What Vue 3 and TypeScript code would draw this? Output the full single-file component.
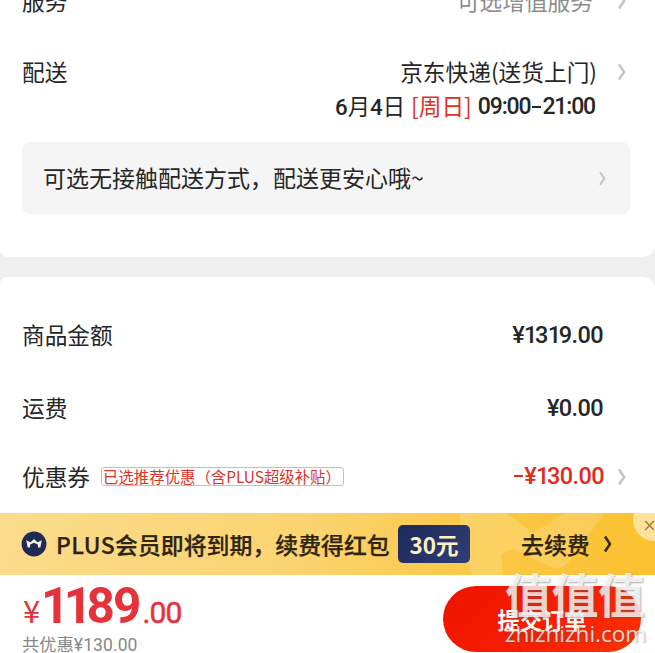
<script setup lang="ts">
interface Fee { label: string; value: string }
const fees: Fee[] = [
  { label: '商品金额', value: '¥1319.00' },
  { label: '运费', value: '¥0.00' },
]
</script>

<template>
  <main class="page">
    <section class="card delivery">
      <div class="row service">
        <span class="label">服务</span>
        <span class="muted">可选增值服务</span>
        <svg class="arrow" viewBox="0 0 10 18"><path d="M2 1.5 L7.2 9 L2 16.5" /></svg>
      </div>
      <div class="row express">
        <span class="label">配送</span>
        <span class="method">京东快递(送货上门)</span>
        <svg class="arrow" viewBox="0 0 10 18"><path d="M2 1.5 L7.2 9 L2 16.5" /></svg>
      </div>
      <div class="when">
        <span class="date"><b>6</b>月<b>4</b>日</span>
        <span class="week">[周日]</span>
        <span class="time">09:00<i class="dash"></i>21:00</span>
      </div>
      <div class="notice">
        <span class="tip">可选无接触配送方式，配送更安心哦~</span>
        <svg class="arrow small" viewBox="0 0 10 18"><path d="M2 1.5 L7.2 9 L2 16.5" /></svg>
      </div>
    </section>

    <section class="card amounts">
      <div v-for="f in fees" :key="f.label" class="row fee">
        <span class="label">{{ f.label }}</span>
        <span class="num"><span v-for="(c, i) in f.value" :key="i" :class="{ one: c === '1' }">{{ c }}</span></span>
      </div>
      <div class="row coupon">
        <span class="label">优惠券</span>
        <span class="tag">已选推荐优惠（含PLUS超级补贴）</span>
        <span class="num red"><i class="dash"></i>¥<span class="one">1</span>30.00</span>
        <svg class="arrow" viewBox="0 0 10 18"><path d="M2 1.5 L7.2 9 L2 16.5" /></svg>
      </div>
    </section>

    <section class="banner">
      <svg class="deco" viewBox="0 0 200 62"><path d="M5 0 H51 L78 20 L110 0 H150 L118 43 Q108 61 92 52 L58 36 L46 41 L48 62 H17 Q5 35 5 0 Z" /></svg>
      <svg class="crown" viewBox="0 0 26 26">
        <circle cx="13" cy="13" r="12.4" />
        <path d="M5.2 9.2 L9.6 11.3 L13 8 L16.4 11.3 L20.8 9.2 L19.3 16.6 H17.1 L16.8 13.6 L13 11.8 L9.2 13.6 L8.9 16.6 H6.7 Z" />
      </svg>
      <span class="promo"><span class="plus">PLUS</span>会员即将到期，续费得红包</span>
      <span class="bonus">30元</span>
      <span class="renew">去续费</span>
      <svg class="go" viewBox="0 0 10 18"><path d="M2 1.5 L7 9 L2 16.5" /></svg>
      <span class="close"><svg viewBox="0 0 12 12"><path d="M1.2 1.2 L10.8 10.8 M10.8 1.2 L1.2 10.8" /></svg></span>
    </section>

    <footer class="footer">
      <div class="sum">
        <div class="total"><span class="yen">¥</span><span class="big"><span class="ones">11</span>89</span><span class="cents">.00</span></div>
        <div class="saved">共优惠<span>¥130.00</span></div>
      </div>
      <button class="submit">提交订单</button>
    </footer>
    <div class="mark">
      <div class="mark-name">值值值</div>
      <div class="mark-url">zhizhizhi.com</div>
    </div>
  </main>
</template>

<style>
body { margin: 0; overflow: hidden; }
</style>
<style scoped>
.page { position: relative; width: 655px; height: 653px; overflow: hidden; background: #f0f0f0; color: #262626; font: 22.7px/36px "Noto Sans CJK SC", sans-serif; display: flex; flex-direction: column; box-sizing: border-box; white-space: nowrap; }
.card { background: #fff; box-sizing: border-box; flex: none; }
.delivery { height: 257px; border-radius: 0 0 12px 7px; padding: 0 25px 0 22px; overflow: hidden; }
.amounts { height: 236px; margin-top: 20px; border-radius: 7px 12px 0 0; padding: 40px 25px 0 22px; }
.row { display: flex; align-items: center; height: 36px; }
.tip { padding-bottom: 2px; }
.label { margin-right: auto; }
.service { margin-top: -17px; }
.express { margin-top: 35px; }
.muted { color: #8c8c8c; }
.arrow { width: 10px; height: 18px; margin-left: 20px; fill: none; stroke: #c3c3c3; stroke-width: 2.4; flex: none; }
.row .arrow { margin-right: 3px; }
.service .muted { margin-right: 4px; }
.when { display: flex; justify-content: flex-end; align-items: center; height: 34px; line-height: 34px; margin-right: 36px; gap: 6px; }
.week { color: #dc321c; padding-bottom: 2px; }
.date { font-size: 22.3px; padding-bottom: 2px; }
.date b, .time, .num { font-family: Roboto, sans-serif; font-weight: 500; }
.time { font-size: 23px; letter-spacing: -1.15px; display: flex; align-items: center; margin-right: -1px; }
.dash { display: inline-block; width: 9px; height: 2.4px; background: currentColor; margin: 0 1px 0 2px; }
.notice { height: 72px; margin-top: 18px; background: #f5f5f5; border-radius: 8px; padding: 0 23px 0 21px; display: flex; align-items: center; justify-content: space-between; font-size: 23px; }
.small { width: 9px; height: 15px; }
.label, .method, .muted { padding-bottom: 1px; }
.fee { margin-bottom: 37px; padding-right: 27px; }
.num { font-size: 23.5px; letter-spacing: -.6px; }
.one { letter-spacing: -2.4px; }
.coupon { margin-top: -4px; }
.coupon .label { margin-right: 11px; padding-bottom: 0; }
.tag { font-size: 15.4px; line-height: 16px; height: 17px; color: #dc3325; border: 1px solid #f2aea6; border-radius: 3px; padding: 0 1px; width: 239px; box-sizing: content-box; margin: 0 auto 1px 0; }
.red { color: #e12b1b; display: flex; align-items: center; margin-right: -7px; padding-bottom: 2px; }
.banner { position: relative; height: 62px; flex: none; background: linear-gradient(100deg, #fbdc8d 0%, #fbd471 45%, #fbc844 75%, #fbc12f 100%); color: #2f2410; display: flex; align-items: center; padding-left: 21px; box-sizing: border-box; overflow: hidden; font-weight: 500; font-size: 22.9px; -webkit-text-stroke: .25px currentColor; }
.deco { position: absolute; right: 0; top: 0; width: 200px; height: 62px; fill: #fff; opacity: .16; }
.crown { width: 26px; height: 26px; margin-right: 9px; position: relative; flex: none; }
.crown circle { fill: #1f2b55; }
.crown path { fill: #f5f0e4; }
.promo { width: 342px; position: relative; }
.plus { letter-spacing: .45px; }
.bonus { width: 72px; height: 38px; line-height: 38px; border-radius: 5px; background: linear-gradient(135deg, #1c2958, #303e78); color: #fff0c4; text-align: center; font-weight: 700; font-size: 22.5px; position: relative; -webkit-text-stroke: 0; }
.renew { margin-left: 51px; position: relative; }
.go { width: 10px; height: 18px; margin-left: 13px; fill: none; stroke: #382a14; stroke-width: 2.6; position: relative; }
.close { position: absolute; right: -20px; top: -14px; width: 42px; height: 42px; border-radius: 50%; background: #fde29a; }
.close svg { position: absolute; left: 11px; top: 21px; width: 11px; height: 11px; fill: none; stroke: #aa7532; stroke-width: 1.5; }
.footer { flex: 1; background: #fff; display: flex; justify-content: space-between; padding: 11px 14px 0 22px; }
.sum { display: flex; flex-direction: column; }
.total { display: flex; align-items: baseline; color: #e6323a; height: 44px; line-height: 40px; font-family: Roboto, sans-serif; }
.yen { width: 18px; font-family: "Noto Sans CJK SC", sans-serif; font-size: 31px; letter-spacing: 0; padding-left: 1px; }
.big { font-size: 49.5px; font-weight: 700; letter-spacing: -2px; }
.ones { letter-spacing: -5.6px; }
.cents { font-size: 30px; letter-spacing: -.9px; margin-left: 3px; -webkit-text-stroke: .5px currentColor; }
.saved { color: #888; font-size: 17.3px; line-height: 28px; }
.saved span { font-family: Roboto, sans-serif; font-size: 17.5px; letter-spacing: .1px; }
.submit { width: 198px; height: 66px; flex: none; border: 0; border-radius: 33px; background: linear-gradient(135deg, #ed1300, #fa2000 60%, #ff3400); color: #fff; font: 700 22.3px/66px "Noto Sans CJK SC", sans-serif; padding: 0; }
.mark { position: absolute; left: 505px; top: 565px; color: rgba(255, 255, 255, .8); text-shadow: 1px 1px 2px rgba(90, 90, 90, .5); }
.mark-name { font-size: 47px; line-height: 56px; font-weight: 700; letter-spacing: -.5px; }
.mark-url { font: 22.5px/26px "Open Sans", sans-serif; }
</style>
